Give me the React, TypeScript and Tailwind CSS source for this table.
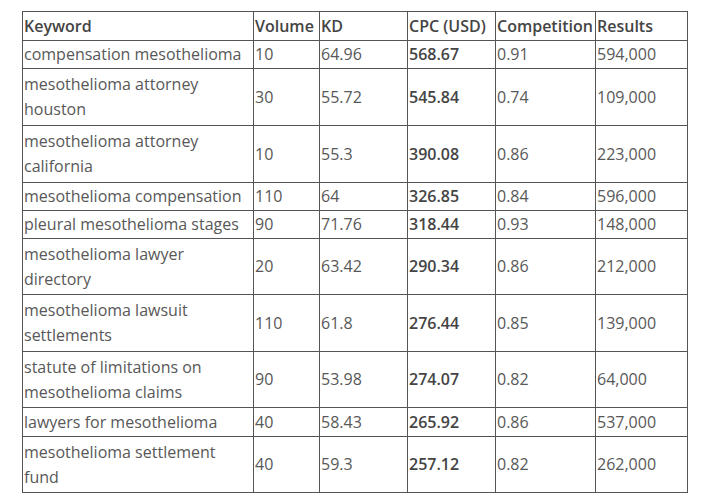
import React from "react";

type Row = { k: React.ReactNode; v: string; kd: string; cpc: string; c: string; r: string; h: string };

const rows: Row[] = [
  { k: "compensation mesothelioma", v: "10", kd: "64.96", cpc: "568.67", c: "0.91", r: "594,000", h: "h-[28px]" },
  { k: <>mesothelioma attorney<br />houston</>, v: "30", kd: "55.72", cpc: "545.84", c: "0.74", r: "109,000", h: "h-[57px]" },
  { k: <>mesothelioma attorney<br />california</>, v: "10", kd: "55.3", cpc: "390.08", c: "0.86", r: "223,000", h: "h-[57px]" },
  { k: "mesothelioma compensation", v: "110", kd: "64", cpc: "326.85", c: "0.84", r: "596,000", h: "h-[28px]" },
  { k: "pleural mesothelioma stages", v: "90", kd: "71.76", cpc: "318.44", c: "0.93", r: "148,000", h: "h-[28px]" },
  { k: <>mesothelioma lawyer<br />directory</>, v: "20", kd: "63.42", cpc: "290.34", c: "0.86", r: "212,000", h: "h-[56px]" },
  { k: <>mesothelioma lawsuit<br />settlements</>, v: "110", kd: "61.8", cpc: "276.44", c: "0.85", r: "139,000", h: "h-[57px]" },
  { k: <>statute of limitations on<br />mesothelioma claims</>, v: "90", kd: "53.98", cpc: "274.07", c: "0.82", r: "64,000", h: "h-[56px]" },
  { k: "lawyers for mesothelioma", v: "40", kd: "58.43", cpc: "265.92", c: "0.86", r: "537,000", h: "h-[29px]" },
  { k: <>mesothelioma settlement<br />fund</>, v: "40", kd: "59.3", cpc: "257.12", c: "0.82", r: "262,000", h: "h-[56px]" },
];

const td = "border-r border-b border-[#555] pl-[1px] pr-0 py-0 align-middle whitespace-nowrap";

export default function App() {
  return (
    <div className="w-[707px] h-[499px] bg-white overflow-hidden pt-[11px] pl-[22px]" style={{ fontFamily: '"Open Sans", sans-serif' }}>
      <table className="table-fixed border-separate border-spacing-0 border-l border-t border-[#555] w-[666px] text-[16px] leading-[25px] text-[#585858]">
        <colgroup>
          <col className="w-[231px]" />
          <col className="w-[66px]" />
          <col className="w-[88px]" />
          <col className="w-[88px]" />
          <col className="w-[100px]" />
          <col className="w-[92px]" />
        </colgroup>
        <thead>
          <tr className="h-[29px] font-semibold text-[#444]">
            <td className={td}>Keyword</td>
            <td className={td}>Volume</td>
            <td className={td}>KD</td>
            <td className={td}>CPC (USD)</td>
            <td className={td}>Competition</td>
            <td className={td}>Results</td>
          </tr>
        </thead>
        <tbody>
          {rows.map((r, i) => (
            <tr key={i} className={r.h}>
              <td className={td}>{r.k}</td>
              <td className={td}>{r.v}</td>
              <td className={td}>{r.kd}</td>
              <td className={td + " font-semibold text-[#444]"}>{r.cpc}</td>
              <td className={td}>{r.c}</td>
              <td className={td}>{r.r}</td>
            </tr>
          ))}
        </tbody>
      </table>
    </div>
  );
}
